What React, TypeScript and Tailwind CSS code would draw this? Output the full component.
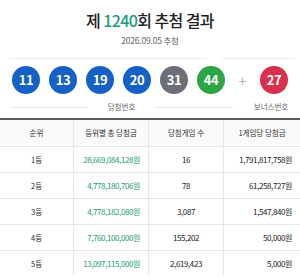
import React from "react";

const FONT = { fontFamily: '"Noto Sans CJK KR", "Noto Sans", sans-serif' };

const balls = [
  { n: 11, c: "bg-[#1561c7]" },
  { n: 13, c: "bg-[#1561c7]" },
  { n: 19, c: "bg-[#1561c7]" },
  { n: 20, c: "bg-[#1561c7]" },
  { n: 31, c: "bg-[#6c6f79]" },
  { n: 44, c: "bg-[#2ca546]" },
];

const rows = [
  { rank: "1등", total: "28,669,084,128원", count: "16", per: "1,791,817,758원" },
  { rank: "2등", total: "4,778,180,706원", count: "78", per: "61,258,727원" },
  { rank: "3등", total: "4,778,182,080원", count: "3,087", per: "1,547,840원" },
  { rank: "4등", total: "7,760,100,000원", count: "155,202", per: "50,000원" },
  { rank: "5등", total: "13,097,115,000원", count: "2,619,423", per: "5,000원" },
];

function Ball({ n, color }: { n: number; color: string }) {
  return (
    <div
      className={`flex h-[28px] w-[28px] shrink-0 items-center justify-center rounded-full text-[13px] font-bold tracking-[-0.3px] text-white ${color}`}
    >
      {n}
    </div>
  );
}

export default function App() {
  return (
    <div className="h-[277px] w-[300px] overflow-hidden bg-white" style={FONT}>
      <div className="pt-[9px] text-center text-[16px] font-medium leading-[22px] tracking-[-0.6px] text-[#222]">
        제 <span className="text-[#1b9b7a]">1240</span>회 추첨 결과
      </div>
      <div className="mt-[3px] text-center text-[8.5px] leading-[12px] tracking-[-0.2px] text-[#666]">
        2026.09.05 추첨
      </div>

      <div className="mt-[12px] flex h-px">
        <div className="ml-[9px] w-[198px] bg-[#ececec]" />
        <div className="ml-[15px] w-[73px] bg-[#ececec]" />
      </div>

      <div className="mt-[7px] flex items-center pl-[12px]">
        <div className="flex gap-[9px]">
          {balls.map((b) => (
            <Ball key={b.n} n={b.n} color={b.c} />
          ))}
        </div>
        <div className="w-[35px] text-center text-[16px] font-light leading-none text-[#aaa]">+</div>
        <Ball n={27} color="bg-[#d8304d]" />
      </div>

      <div className="mt-[7px] flex h-[12px] items-center text-[7.5px] leading-[12px] text-[#666]">
        <div className="ml-[10px] h-px w-[78px] bg-[#ececec]" />
        <div className="w-[67px] text-center">당첨번호</div>
        <div className="h-px w-[78px] bg-[#ececec]" />
        <div className="ml-[10px] w-[56px] text-center">보너스번호</div>
      </div>

      <div className="mt-[5px] border-t-2 border-[#5a5a5a]">
        <div className="grid h-[26px] grid-cols-[74px_75px_75px_76px] bg-[#fafafa] text-[7.5px] text-[#333]">
          <div className="flex items-center justify-center border-r border-[#e6e6e6]">순위</div>
          <div className="flex items-center justify-center border-r border-[#e6e6e6]">등위별 총 당첨금</div>
          <div className="flex items-center justify-center border-r border-[#e6e6e6]">당첨게임 수</div>
          <div className="flex items-center justify-center">1게임당 당첨금</div>
        </div>
        {rows.map((r) => (
          <div
            key={r.rank}
            className="grid h-[26px] grid-cols-[74px_75px_75px_76px] whitespace-nowrap border-t border-[#e6e6e6] text-[8px] tracking-[-0.4px] text-[#222]"
          >
            <div className="flex items-center justify-center border-r border-[#e6e6e6] text-[7.5px] tracking-normal">
              {r.rank}
            </div>
            <div className="flex items-center justify-end border-r border-[#e6e6e6] pr-[8px] text-[#239a77]">
              {r.total}
            </div>
            <div className="flex items-center justify-center border-r border-[#e6e6e6]">{r.count}</div>
            <div className="flex items-center justify-end pr-[8px]">{r.per}</div>
          </div>
        ))}
      </div>
    </div>
  );
}
